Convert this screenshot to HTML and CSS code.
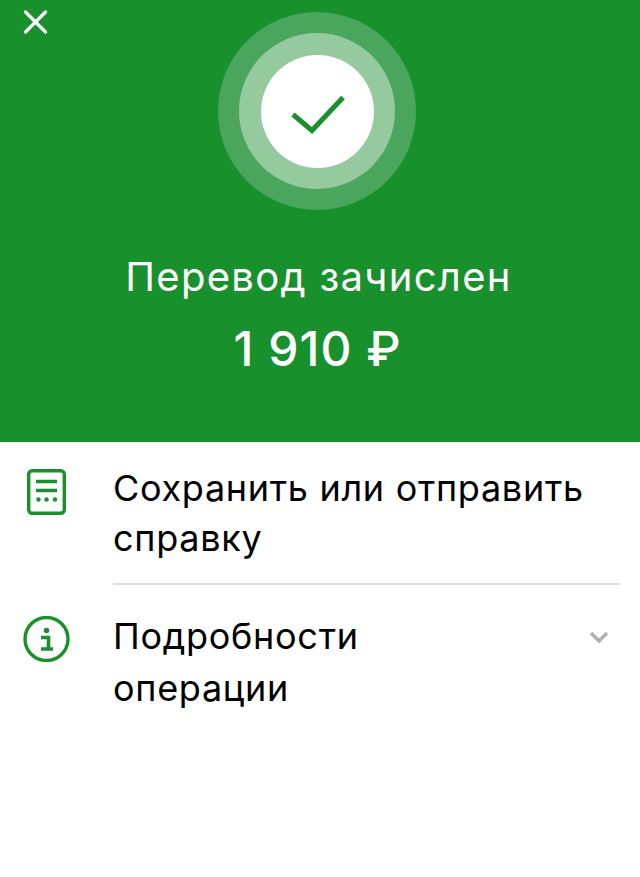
FILE: index.html
```html
<!DOCTYPE html>
<html lang="ru">
<head>
    <meta charset="UTF-8">
    <title>Перевод зачислен</title>
    <link rel="stylesheet" href="styles.css">
</head>
<body>
<header class="status">
    <div class="close-icon">
        <svg width="25" height="24" viewBox="0 0 25 24"><path d="M2.500 2L22.500 22M22.500 2L2.500 22" stroke="#fff" stroke-width="3.200" stroke-linecap="round"/></svg>
    </div>
    <div class="ring-outer">
        <div class="ring-inner">
            <div class="ring-center">
                <svg class="check" width="54" height="40" viewBox="0 0 54 40"><path d="M2 19.500L21 35.500L52 2.500" fill="none" stroke="#18912d" stroke-width="5"/></svg>
            </div>
        </div>
    </div>
    <div class="status-title">Перевод зачислен</div>
    <div class="status-sum">1 910 ₽</div>
</header>

<div class="menu">
    <div class="menu-row">
        <div class="menu-icon icon-doc">
            <svg width="39" height="46" viewBox="0 0 39 46"><rect x="1.700" y="1.700" width="35.600" height="42.600" rx="3.500" fill="none" stroke="#18912d" stroke-width="3.400"/><path d="M9 12.500H30M9 21.500H30" stroke="#18912d" stroke-width="3.400"/><circle cx="11.500" cy="30.500" r="2.200" fill="#18912d"/><circle cx="19.500" cy="30.500" r="2.200" fill="#18912d"/><circle cx="28" cy="30.500" r="2.200" fill="#18912d"/></svg>
        </div>
        <div class="menu-text divided">Сохранить или отправить справку</div>
    </div>
    <div class="menu-row">
        <div class="menu-icon icon-info">
            <svg width="47" height="46" viewBox="0 0 47 46"><circle cx="23.500" cy="23" r="21.500" fill="none" stroke="#18912d" stroke-width="3.400"/><circle cx="23.500" cy="14.500" r="2.800" fill="#18912d"/><path d="M18 21.500H25.500V33M18 33H30" fill="none" stroke="#18912d" stroke-width="3.600"/></svg>
        </div>
        <div class="menu-text narrow">Подробности операции</div>
        <svg class="chevron" width="20" height="12" viewBox="0 0 20 12"><path d="M2 2L10 10L18 2" fill="none" stroke="#b0b0b0" stroke-width="3.500"/></svg>
    </div>
</div>
</body>
</html>
```

FILE: styles.css
```css
html, body {
    margin: 0;
    padding: 0;
    font-family: Inter, "Noto Sans", sans-serif;
    background-color: #fff;
}

.status {
    position: relative;
    height: 442px;
    background-color: #18912d;
    color: white;
    display: flex;
    flex-direction: column;
    align-items: center;
    padding-top: 12px;
    box-sizing: border-box;
}

.close-icon {
    position: absolute;
    top: 10px;
    left: 23px;
    line-height: 0;
}

.ring-outer {
    width: 198px;
    height: 198px;
    margin-right: 6px;
    border-radius: 50%;
    background-color: #4aa65c;
    display: flex;
    align-items: center;
    justify-content: center;
}

.ring-inner {
    width: 156px;
    height: 156px;
    border-radius: 50%;
    background-color: #95ca9f;
    display: flex;
    align-items: center;
    justify-content: center;
}

.ring-center {
    width: 113px;
    height: 113px;
    border-radius: 50%;
    background-color: #fff;
    display: flex;
    align-items: center;
    justify-content: center;
}

.check {
    margin: 7px 0 0 2px;
}

.status-title {
    font-size: 40px;
    line-height: 52px;
    letter-spacing: 1.300px;
    margin-top: 41px;
    margin-right: 3px;
}

.status-sum {
    font-size: 48px;
    line-height: 64px;
    font-weight: 500;
    letter-spacing: 1px;
    margin-top: 14px;
    margin-right: 5px;
}

.menu-row {
    display: flex;
    align-items: flex-start;
}

.menu-icon {
    flex: none;
    line-height: 0;
    box-sizing: border-box;
    width: 113px;
}

.icon-doc {
    padding: 27px 0 0 27px;
}

.icon-info {
    padding: 31px 0 0 23px;
}

.menu-text {
    flex: 1;
    font-size: 36px;
    font-weight: 430;
    line-height: 50px;
    letter-spacing: 0.700px;
    color: #000;
    padding: 21px 0 20px;
}

.divided {
    margin-right: 20px;
    border-bottom: 2px solid #e0e0e0;
}

.narrow {
    line-height: 52px;
    padding: 25px 200px 0 0;
}

.chevron {
    flex: none;
    margin: 46px 31px 0 0;
}
```
